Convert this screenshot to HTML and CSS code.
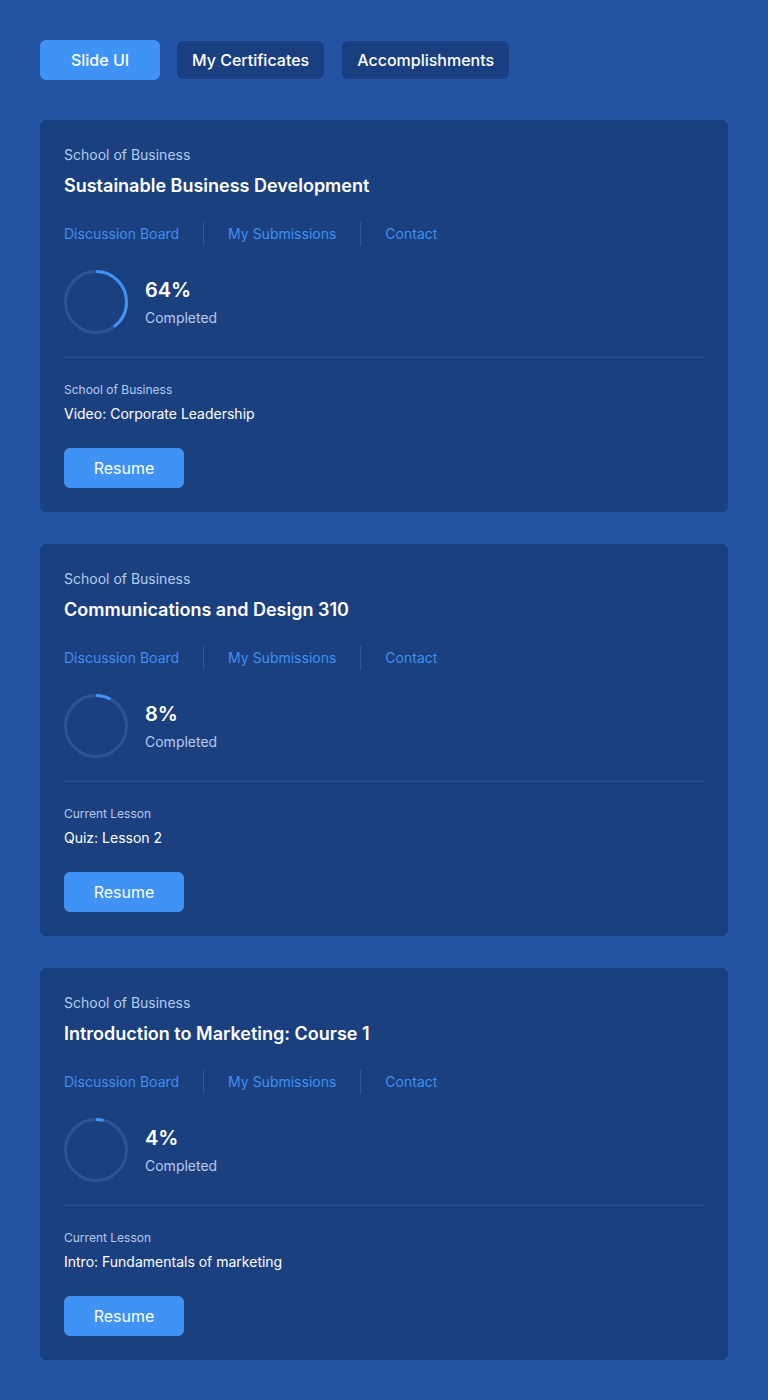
FILE: index.html
```html
<!DOCTYPE html>
<html lang="en">
<head>
<meta charset="utf-8">
<title>Courses</title>
<link rel="stylesheet" href="styles.css">
</head>
<body>
<div class="page">
  <nav class="tabs">
    <button class="tab active">Slide UI</button>
    <button class="tab">My Certificates</button>
    <button class="tab">Accomplishments</button>
  </nav>

  <div class="cards">
  <section class="card">
    <div class="school">School of Business</div>
    <h2 class="title">Sustainable Business Development</h2>
    <div class="links">
      <a class="link">Discussion Board</a>
      <a class="link">My Submissions</a>
      <a class="link">Contact</a>
    </div>
    <div class="progress">
      <svg class="ring" width="64" height="64" viewBox="0 0 64 64">
        <circle class="track" cx="32" cy="32" r="30.5"/>
        <circle class="bar" cx="32" cy="32" r="30.5" style="stroke-dasharray: 76.6 191.6"/>
      </svg>
      <div class="ptext">
        <div class="pct">64%</div>
        <div class="done">Completed</div>
      </div>
    </div>
    <div class="divider"></div>
    <div class="lesson-label">School of Business</div>
    <div class="lesson">Video: Corporate Leadership</div>
    <button class="resume">Resume</button>
  </section>

  <section class="card">
    <div class="school">School of Business</div>
    <h2 class="title">Communications and Design 310</h2>
    <div class="links">
      <a class="link">Discussion Board</a>
      <a class="link">My Submissions</a>
      <a class="link">Contact</a>
    </div>
    <div class="progress">
      <svg class="ring" width="64" height="64" viewBox="0 0 64 64">
        <circle class="track" cx="32" cy="32" r="30.5"/>
        <circle class="bar" cx="32" cy="32" r="30.5" style="stroke-dasharray: 15.3 191.6"/>
      </svg>
      <div class="ptext">
        <div class="pct">8%</div>
        <div class="done">Completed</div>
      </div>
    </div>
    <div class="divider"></div>
    <div class="lesson-label">Current Lesson</div>
    <div class="lesson">Quiz: Lesson 2</div>
    <button class="resume">Resume</button>
  </section>

  <section class="card">
    <div class="school">School of Business</div>
    <h2 class="title">Introduction to Marketing: Course 1</h2>
    <div class="links">
      <a class="link">Discussion Board</a>
      <a class="link">My Submissions</a>
      <a class="link">Contact</a>
    </div>
    <div class="progress">
      <svg class="ring" width="64" height="64" viewBox="0 0 64 64">
        <circle class="track" cx="32" cy="32" r="30.5"/>
        <circle class="bar" cx="32" cy="32" r="30.5" style="stroke-dasharray: 7.7 191.6"/>
      </svg>
      <div class="ptext">
        <div class="pct">4%</div>
        <div class="done">Completed</div>
      </div>
    </div>
    <div class="divider"></div>
    <div class="lesson-label">Current Lesson</div>
    <div class="lesson">Intro: Fundamentals of marketing</div>
    <button class="resume">Resume</button>
  </section>
  </div>
</div>
</body>
</html>
```

FILE: styles.css
```css
* { box-sizing: border-box; }
html, body { margin: 0; padding: 0; }
body {
  background: #2353a3;
  font-family: Inter, "Noto Sans", sans-serif;
  color: #ffffff;
}
.page {
  padding: 40px;
  display: flex;
  flex-direction: column;
  gap: 40px;
}
.tabs {
  display: flex;
  align-items: center;
  gap: 16px;
}
.tab {
  font-family: inherit;
  font-size: 16px;
  font-weight: 500;
  color: #ffffff;
  border: none;
  border-radius: 6px;
  background: #1a3f80;
  height: 38px;
  margin: 0 1px;
  padding: 0 15px;
  line-height: 38px;
}
.tab.active {
  background: #3f93f5;
  height: 40px;
  min-width: 120px;
  margin: 0;
  line-height: 40px;
}
.cards { display: flex; flex-direction: column; gap: 32px; }
.card {
  background: #1b4080;
  border-radius: 6px;
  padding: 24px;
  display: flex;
  flex-direction: column;
  align-items: flex-start;
}
.school {
  font-size: 14px;
  line-height: 20px;
  margin-top: 1px;
  color: #b6caee;
}
.title {
  margin: 8px 0 0;
  font-size: 18px;
  line-height: 26px;
  font-weight: 600;
  color: #ffffff;
}
.links {
  display: flex;
  align-items: center;
  margin-top: 23px;
}
.link {
  font-size: 14px;
  line-height: 24px;
  color: #3f8ff0;
  padding: 0 24px;
  border-left: 1px solid #2f5a9c;
}
.link:first-child { padding-left: 0; border-left: none; }
.progress {
  display: flex;
  align-items: center;
  gap: 17px;
  margin-top: 24px;
}
.ring { display: block; flex: none; }
.track {
  fill: none;
  stroke: #2b5597;
  stroke-width: 3;
}
.bar {
  fill: none;
  stroke: #3f93f5;
  stroke-width: 3;
  transform: rotate(-90deg);
  transform-origin: 32px 32px;
}
.ptext { display: flex; flex-direction: column; gap: 5px; }
.pct {
  font-size: 20px;
  line-height: 26px;
  font-weight: 600;
}
.done {
  font-size: 14px;
  line-height: 20px;
  color: #b6caee;
}
.divider {
  align-self: stretch;
  height: 1px;
  background: #2a5396;
  margin-top: 23px;
}
.lesson-label {
  margin-top: 24px;
  font-size: 12px;
  line-height: 16px;
  color: #b6caee;
}
.lesson {
  margin-top: 6px;
  font-size: 14px;
  line-height: 20px;
  font-weight: 400;
  color: #ffffff;
}
.resume {
  margin-top: 24px;
  width: 120px;
  height: 40px;
  border: none;
  border-radius: 6px;
  background: #3f93f5;
  color: #ffffff;
  font-family: inherit;
  font-size: 16px;
  font-weight: 400;
}
```
